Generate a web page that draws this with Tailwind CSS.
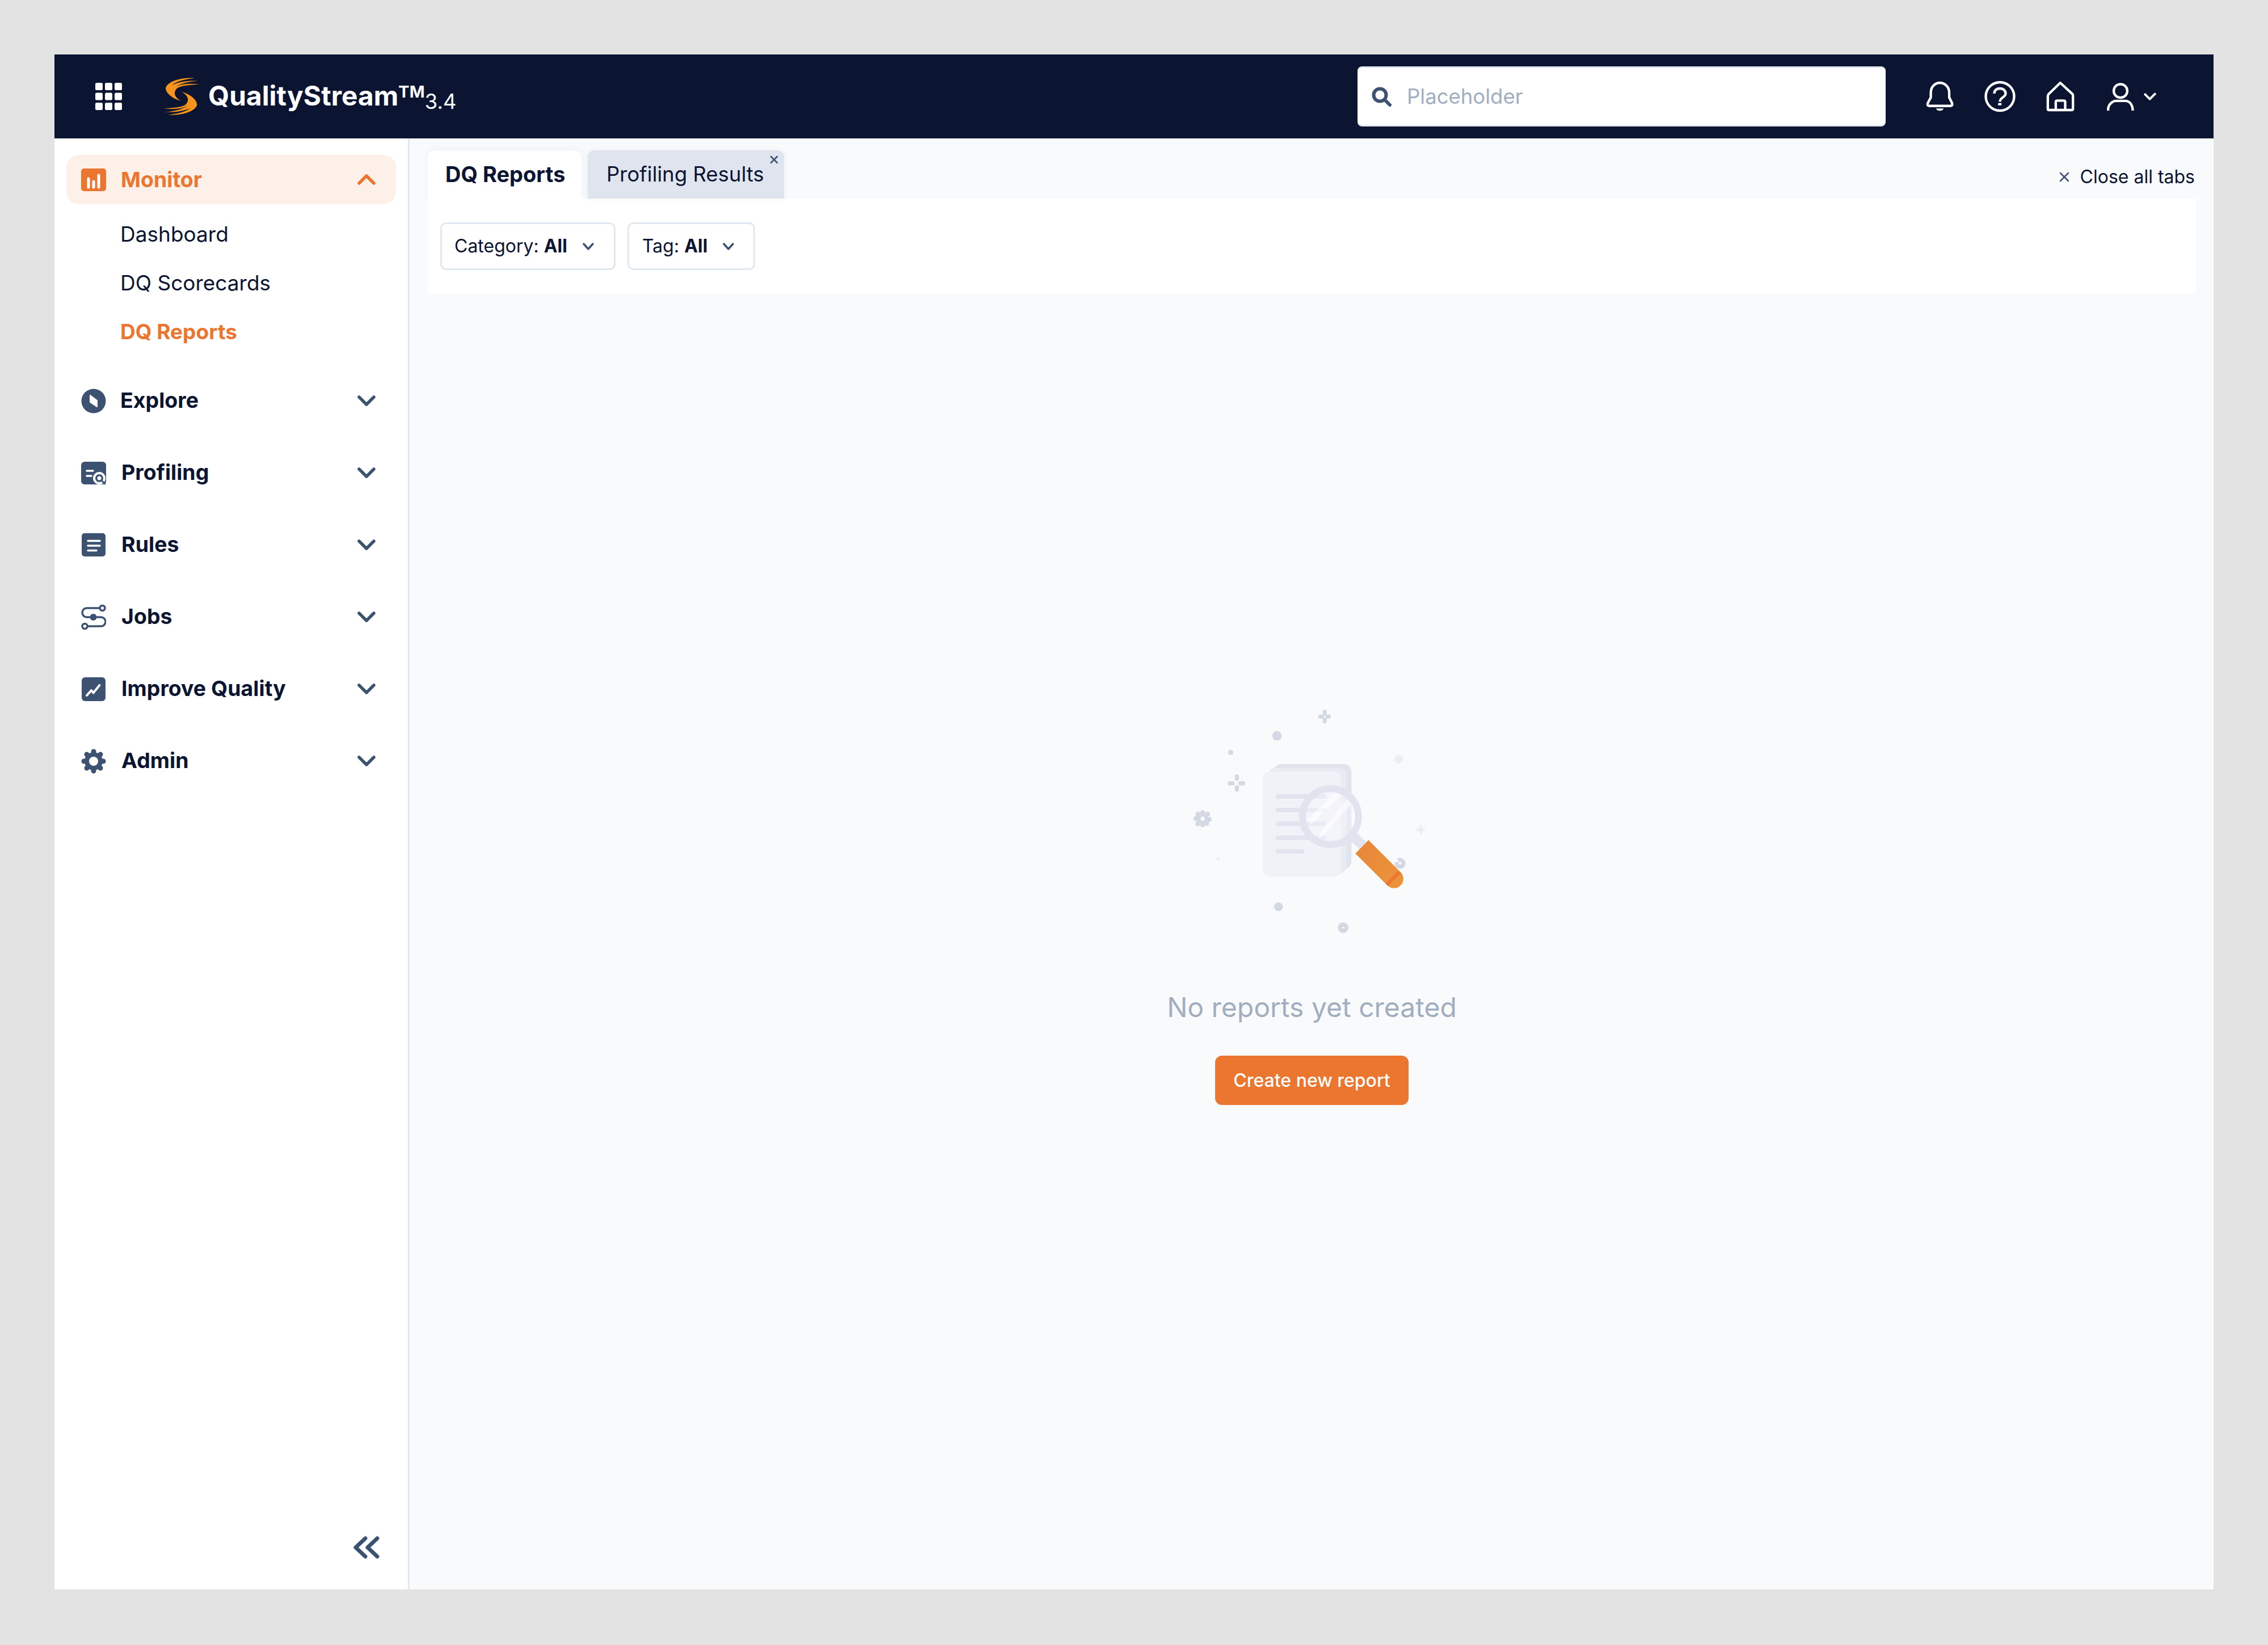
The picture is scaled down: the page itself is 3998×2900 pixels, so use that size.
<!DOCTYPE html>
<html lang="en">
<head>
    <meta charset="UTF-8">
    <title>QualityStream</title>
    <script src="https://cdn.jsdelivr.net/npm/@tailwindcss/browser@4"></script>
</head>
<body class="w-[3998px] h-[2900px] bg-[#e3e3e3] pt-[96px] pl-[96px] font-[Inter,sans-serif] text-[#0b1430]">
<div class="w-[3806px] h-[2706px] flex flex-col bg-white">

    <!-- top bar -->
    <header class="h-[148px] shrink-0 bg-[#0b1430] flex items-center pr-[100px] text-white">
        <svg class="ml-[72px] w-[47px] h-[48px]" viewBox="0 0 47 48" fill="#fff">
            <rect x="0" y="0" width="13" height="13" rx="2.5"/><rect x="17" y="0" width="13" height="13" rx="2.5"/><rect x="34" y="0" width="13" height="13" rx="2.5"/>
            <rect x="0" y="17.500" width="13" height="13" rx="2.5"/><rect x="17" y="17.500" width="13" height="13" rx="2.5"/><rect x="34" y="17.500" width="13" height="13" rx="2.5"/>
            <rect x="0" y="35" width="13" height="13" rx="2.5"/><rect x="17" y="35" width="13" height="13" rx="2.5"/><rect x="34" y="35" width="13" height="13" rx="2.5"/>
        </svg>
        <svg class="ml-[73px] w-[65px] h-[70px]" viewBox="85 105 195 210" fill="#f7941d">
            <g id="swoosh"><path d="M250 113C190 108 110 125 97 165C97 195 140 225 178 233C150 220 130 190 160 165C185 150 240 148 275 146C230 142 180 140 140 165C175 140 225 130 265 128C225 125 170 130 130 150C160 125 210 118 250 113Z"/></g>
            <use href="#swoosh" transform="rotate(180 180 210)"/>
        </svg>
        <div class="ml-[14px] pt-[3px] flex items-start leading-none">
            <span class="text-[47.800px] font-bold">QualityStream</span>
            <span class="text-[29px] font-bold mt-[1px]">TM</span>
            <span class="text-[36.500px] mt-[15px]">3.4</span>
        </div>
        <div class="ml-auto w-[931px] h-[106px] bg-white rounded-[8px] border-y-[3px] border-[#e2e8f0] flex items-center pl-[25px]">
            <svg class="w-[35px] h-[35px]" viewBox="0 0 35 35" fill="none" stroke="#3d5270" stroke-width="6" stroke-linecap="round"><circle cx="14.500" cy="14.500" r="11"/><path d="M23 23l9 9"/></svg>
            <span class="ml-[27px] text-[36.500px] text-[#a0aec0]">Placeholder</span>
        </div>
        <svg class="ml-[70px] w-[52px] h-[57px]" viewBox="45 36 157 170" fill="none" stroke="#fff" stroke-width="13" stroke-linejoin="round"><path d="M122 47C150 47 172 70 172 100V125L187 155Q192 170 178 170H67Q52 170 58 155L74 125V100C74 70 95 47 122 47Z"/><path d="M102 184H142C138 200 106 200 102 184Z" fill="#fff" stroke="none"/></svg>
        <svg class="ml-[52px] w-[55px] h-[56px]" viewBox="358 36 164 168" fill="none" stroke="#fff" stroke-width="13"><circle cx="440" cy="120" r="75"/><path d="M410 105C410 85 425 78 440 78C458 78 470 90 470 105C470 125 440 125 440 148"/><rect x="430" y="155" width="18" height="12" fill="#fff" stroke="none"/></svg>
        <svg class="ml-[53px] w-[52px] h-[56px]" viewBox="680 36 155 168" fill="none" stroke="#fff" stroke-width="13" stroke-linejoin="round"><path d="M757 48L695 108Q691 113 691 120V185Q691 192 698 192H815Q824 192 824 185V115Q824 110 820 106Z"/><path d="M733 192V150Q733 142 741 142H775Q783 142 783 150V192"/></svg>
        <svg class="ml-[55px] w-[50px] h-[53px]" viewBox="1000 36 150 160" fill="none" stroke="#fff" stroke-width="13"><circle cx="1075" cy="85" r="36"/><path d="M1009 190V185C1009 155 1035 138 1050 138H1100C1125 138 1140 160 1140 190"/></svg>
        <svg class="ml-[15px] w-[24px] h-[15px]" viewBox="1195 100 72 45" fill="none" stroke="#fff" stroke-width="12" stroke-linecap="round" stroke-linejoin="round"><path d="M1205 110L1230 135L1257 108"/></svg>
    </header>

    <div class="flex flex-1 min-h-0">
        <!-- sidebar -->
        <aside class="w-[626px] shrink-0 border-r-[3px] border-[#e2e8f0] flex flex-col pl-[21px] pr-[21px] pt-[29px] pb-[54px]">
            <div class="h-[87px] rounded-[22px] bg-[#fdf0e9] flex items-center pl-[26px] pr-[36px] text-[#ea762f]">
                <svg class="w-[44px] h-[40px]" viewBox="0 0 44 40"><rect width="44" height="40" rx="5" fill="#ea762f"/><g stroke="#fff" stroke-width="5" stroke-linecap="round"><path d="M13 18v15M22 23v10M31 12v21"/></g></svg>
                <span class="ml-[26px] pt-[2px] text-[37.500px] font-[650] flex-1">Monitor</span>
                <svg class="w-[32px] h-[19px]" viewBox="0 0 32 19" fill="none" stroke="#ea762f" stroke-width="5.500" stroke-linecap="round" stroke-linejoin="round"><path d="M3 16L16 3l13 13"/></svg>
            </div>
            <div class="flex flex-col pl-[95px] text-[37px] leading-[86px] mt-[10px]">
                <span>Dashboard</span>
                <span>DQ Scorecards</span>
                <span class="font-[650] text-[#ea762f]">DQ Reports</span>
            </div>
            <nav class="flex flex-col mt-[15px] text-[37.500px] font-[650]">
                <div class="h-[127px] flex items-center pl-[26px] pr-[36px]">
                    <svg class="w-[44px] h-[44px]" viewBox="0 0 44 44"><circle cx="22" cy="22" r="21.500" fill="#3d5270"/><path d="M16 12l12 9v11l-12-8z" fill="#fff" stroke="#fff" stroke-width="2" stroke-linejoin="round"/></svg>
                    <span class="ml-[25px] flex-1">Explore</span>
                    <svg class="w-[32px] h-[19px]" viewBox="0 0 32 19" fill="none" stroke="#3d5270" stroke-width="5.500" stroke-linecap="round" stroke-linejoin="round"><path d="M3 3l13 13L29 3"/></svg>
                </div>
                <div class="h-[127px] flex items-center pl-[26px] pr-[36px]">
                    <svg class="w-[44px] h-[40px]" viewBox="0 0 44 40"><rect width="44" height="40" rx="6" fill="#3d5270"/><g stroke="#fff" stroke-width="3.500" stroke-linecap="round"><path d="M10 16h11M10 25h8"/></g><circle cx="32" cy="29" r="11" fill="#fff"/><circle cx="32" cy="29" r="7" fill="#3d5270"/><circle cx="32" cy="29" r="3.500" fill="#fff"/><path d="M37 34l5 5" stroke="#3d5270" stroke-width="3" stroke-linecap="round"/></svg>
                    <span class="ml-[27px] flex-1">Profiling</span>
                    <svg class="w-[32px] h-[19px]" viewBox="0 0 32 19" fill="none" stroke="#3d5270" stroke-width="5.500" stroke-linecap="round" stroke-linejoin="round"><path d="M3 3l13 13L29 3"/></svg>
                </div>
                <div class="h-[127px] flex items-center pl-[26px] pr-[36px]">
                    <svg class="w-[44px] h-[41px]" viewBox="0 0 44 41"><rect x="1" width="42" height="41" rx="5" fill="#3d5270"/><g stroke="#fff" stroke-width="3.500" stroke-linecap="round"><path d="M12 13.500h21M12 22h21M12 30.500h15"/></g></svg>
                    <span class="ml-[27px] flex-1">Rules</span>
                    <svg class="w-[32px] h-[19px]" viewBox="0 0 32 19" fill="none" stroke="#3d5270" stroke-width="5.500" stroke-linecap="round" stroke-linejoin="round"><path d="M3 3l13 13L29 3"/></svg>
                </div>
                <div class="h-[127px] flex items-center pl-[26px] pr-[36px]">
                    <svg class="w-[44px] h-[44px]" viewBox="0 0 44 44" fill="none" stroke="#3d5270" stroke-width="3.500"><circle cx="37.500" cy="6" r="4.500"/><circle cx="6.500" cy="38" r="4.500"/><path d="M33 6H10a7.500 7.500 0 0 0 0 16h25a7.500 7.500 0 0 1 0 16H11"/><circle cx="21.500" cy="22" r="6" fill="#3d5270" stroke="none"/></svg>
                    <span class="ml-[27px] flex-1">Jobs</span>
                    <svg class="w-[32px] h-[19px]" viewBox="0 0 32 19" fill="none" stroke="#3d5270" stroke-width="5.500" stroke-linecap="round" stroke-linejoin="round"><path d="M3 3l13 13L29 3"/></svg>
                </div>
                <div class="h-[127px] flex items-center pl-[26px] pr-[36px]">
                    <svg class="w-[44px] h-[44px]" viewBox="0 0 44 44"><rect x="1" y="1" width="42" height="42" rx="6" fill="#3d5270"/><path d="M10 33l8-9 3.500 4.500L32.500 15" fill="none" stroke="#fff" stroke-width="4" stroke-linecap="round" stroke-linejoin="round"/></svg>
                    <span class="ml-[27px] flex-1">Improve Quality</span>
                    <svg class="w-[32px] h-[19px]" viewBox="0 0 32 19" fill="none" stroke="#3d5270" stroke-width="5.500" stroke-linecap="round" stroke-linejoin="round"><path d="M3 3l13 13L29 3"/></svg>
                </div>
                <div class="h-[127px] flex items-center pl-[26px] pr-[36px]">
                    <svg class="w-[44px] h-[44px]" viewBox="0 0 44 44" fill="#3d5270"><circle cx="22" cy="22" r="16"/><circle cx="22" cy="5" r="4.500"/><circle cx="22" cy="39" r="4.500"/><circle cx="5" cy="22" r="4.500"/><circle cx="39" cy="22" r="4.500"/><circle cx="10" cy="10" r="4.500"/><circle cx="34" cy="10" r="4.500"/><circle cx="10" cy="34" r="4.500"/><circle cx="34" cy="34" r="4.500"/><circle cx="22" cy="22" r="8" fill="#fff"/></svg>
                    <span class="ml-[27px] flex-1">Admin</span>
                    <svg class="w-[32px] h-[19px]" viewBox="0 0 32 19" fill="none" stroke="#3d5270" stroke-width="5.500" stroke-linecap="round" stroke-linejoin="round"><path d="M3 3l13 13L29 3"/></svg>
                </div>
            </nav>
            <svg class="mt-auto ml-[506px] w-[46px] h-[40px]" viewBox="0 0 46 40" fill="none" stroke="#3b5271" stroke-width="7" stroke-linecap="round" stroke-linejoin="round"><path d="M21 4L4 20l17 16M42 4L25 20l17 16"/></svg>
        </aside>

        <!-- main -->
        <main class="flex-1 bg-[#f9fafc] flex flex-col pl-[32px] pr-[31px] pt-[21px]">
            <div class="h-[85px] flex items-stretch shrink-0">
                <div class="w-[271px] bg-white rounded-t-[12px] shadow-[0_-2px_10px_rgba(100,116,139,0.08)] flex items-center pl-[31px] text-[38px] font-[650]">DQ Reports</div>
                <div class="relative ml-[11px] w-[346px] bg-[#e0e4ee] rounded-t-[12px] shadow-[0_0_10px_rgba(100,116,139,0.1)] flex items-center pl-[33px] text-[36.500px]">
                    Profiling Results
                    <svg class="absolute top-[9px] right-[10px] w-[15px] h-[15px]" viewBox="0 0 15 15" stroke="#3d5270" stroke-width="2.500" stroke-linecap="round"><path d="M2 2l11 11M13 2L2 13"/></svg>
                </div>
                <div class="ml-auto flex items-center gap-[18px] pr-[2px] pt-[9px] text-[32px]">
                    <svg class="w-[20px] h-[18px]" viewBox="0 0 20 18" stroke="#3d5270" stroke-width="2.500" stroke-linecap="round"><path d="M3 2l14 14M17 2L3 16"/></svg>
                    <span>Close all tabs</span>
                </div>
            </div>
            <div class="h-[168px] shrink-0 bg-white flex gap-[21px] pl-[22px] pt-[42px]">
                <div class="h-[84px] w-[309px] border-[3px] border-[#e2e8f0] rounded-[10px] flex items-center pl-[22px] text-[32px]">
                    <span>Category: <b class="font-[650]">All</b></span>
                    <svg class="ml-[27px] w-[20px] h-[13px]" viewBox="0 0 20 13" fill="none" stroke="#3d5270" stroke-width="3.500" stroke-linecap="round" stroke-linejoin="round"><path d="M2 2l8 9 8-9"/></svg>
                </div>
                <div class="h-[84px] w-[225px] border-[3px] border-[#e2e8f0] rounded-[10px] flex items-center pl-[23px] text-[32px]">
                    <span>Tag: <b class="font-[650]">All</b></span>
                    <svg class="ml-[27px] w-[20px] h-[13px]" viewBox="0 0 20 13" fill="none" stroke="#3d5270" stroke-width="3.500" stroke-linecap="round" stroke-linejoin="round"><path d="M2 2l8 9 8-9"/></svg>
                </div>
            </div>
            <div class="flex flex-col items-center pt-[701px]">
                <svg class="w-[506px] h-[440px]" viewBox="0 0 1518 1320">
                    <defs>
                        <linearGradient id="handle" x1="0" y1="0" x2="1" y2="1"><stop offset="0" stop-color="#e8863a"/><stop offset="1" stop-color="#eb953a"/></linearGradient>
                    </defs>
                    <!-- pages -->
                    <rect x="555" y="384" width="412" height="555" rx="40" fill="#e1e4ef"/>
                    <rect x="525" y="404" width="415" height="560" rx="40" fill="#e9ebf3"/>
                    <rect x="498" y="422" width="414" height="558" rx="40" fill="#f1f2f8"/>
                    <g fill="#e1e4ef">
                        <rect x="566" y="543" width="268" height="24" rx="12"/>
                        <rect x="566" y="615" width="268" height="24" rx="12"/>
                        <rect x="566" y="688" width="268" height="24" rx="12"/>
                        <rect x="566" y="762" width="268" height="24" rx="12"/>
                        <rect x="566" y="834" width="152" height="24" rx="12"/>
                    </g>
                    <!-- magnifier -->
                    <path d="M980 770L1040 828" stroke="#e1e4ef" stroke-width="52"/>
                    <circle cx="856" cy="662" r="148" fill="#fff" fill-opacity="0.25" stroke="#e1e4ef" stroke-width="36"/>
                    <path d="M730 680L880 535L912 548L755 700ZM785 768L945 568L968 595L810 770Z" fill="#fff" fill-opacity="0.6"/>
                    <!-- specks -->
                    <g fill="#d2d9e2">
                        <circle cx="573" cy="235" r="25"/>
                        <circle cx="328" cy="322" r="14"/>
                        <circle cx="581" cy="1139" r="23"/>
                        <circle cx="923" cy="1249" r="28"/>
                        <circle cx="1224" cy="909" r="29"/>
                        <rect x="815" y="97" width="21" height="32" rx="10"/><rect x="815" y="137" width="21" height="32" rx="10"/><rect x="791" y="122" width="30" height="21" rx="10"/><rect x="830" y="122" width="28" height="21" rx="10"/>
                        <rect x="350" y="438" width="22" height="34" rx="11"/><rect x="350" y="496" width="22" height="34" rx="11"/><rect x="313" y="475" width="36" height="22" rx="11"/><rect x="369" y="475" width="36" height="22" rx="11"/>
                        <circle cx="180" cy="672" r="30"/><circle cx="180" cy="642" r="14"/><circle cx="180" cy="704" r="14"/><circle cx="146" cy="672" r="14"/><circle cx="214" cy="677" r="14"/><circle cx="155" cy="648" r="13"/><circle cx="206" cy="648" r="13"/><circle cx="154" cy="700" r="13"/><circle cx="202" cy="698" r="12"/>
                    </g>
                    <path d="M1192 888h22l2 14-24 2z" fill="#fbfcfe"/>
                    <circle cx="1224" cy="908" r="7" fill="#fbfcfe"/>
                    <circle cx="180" cy="673" r="11" fill="#fbfcfe"/>
                    <circle cx="923" cy="1249" r="5" fill="#fbfcfe"/>
                    <circle cx="1217" cy="358" r="23" fill="#eceef1"/>
                    <path d="M1334 702l9 21 21 9-21 9-9 21-9-21-21-9 21-9zM261 871l4 10 10 4-10 4-4 10-4-10-10-4 10-4z" fill="#eceef1"/>
                    <path d="M1057 786L1226 955A48 48 0 0 1 1158 1027L988 857Z" fill="url(#handle)"/>
                    <path d="M1215 948L1228 960L1160 1028L1148 1016Z" fill="#ec7530"/>
                </svg>
                <p class="mt-[88px] text-[48px] leading-[58px] text-[#a0aec0]">No reports yet created</p>
                <div class="mt-[56px] w-[341px] h-[87px] rounded-[12px] bg-[#ea7630] text-white text-[32px] font-medium flex items-center justify-center">Create new report</div>
            </div>
        </main>
    </div>
</div>
</body>
</html>
